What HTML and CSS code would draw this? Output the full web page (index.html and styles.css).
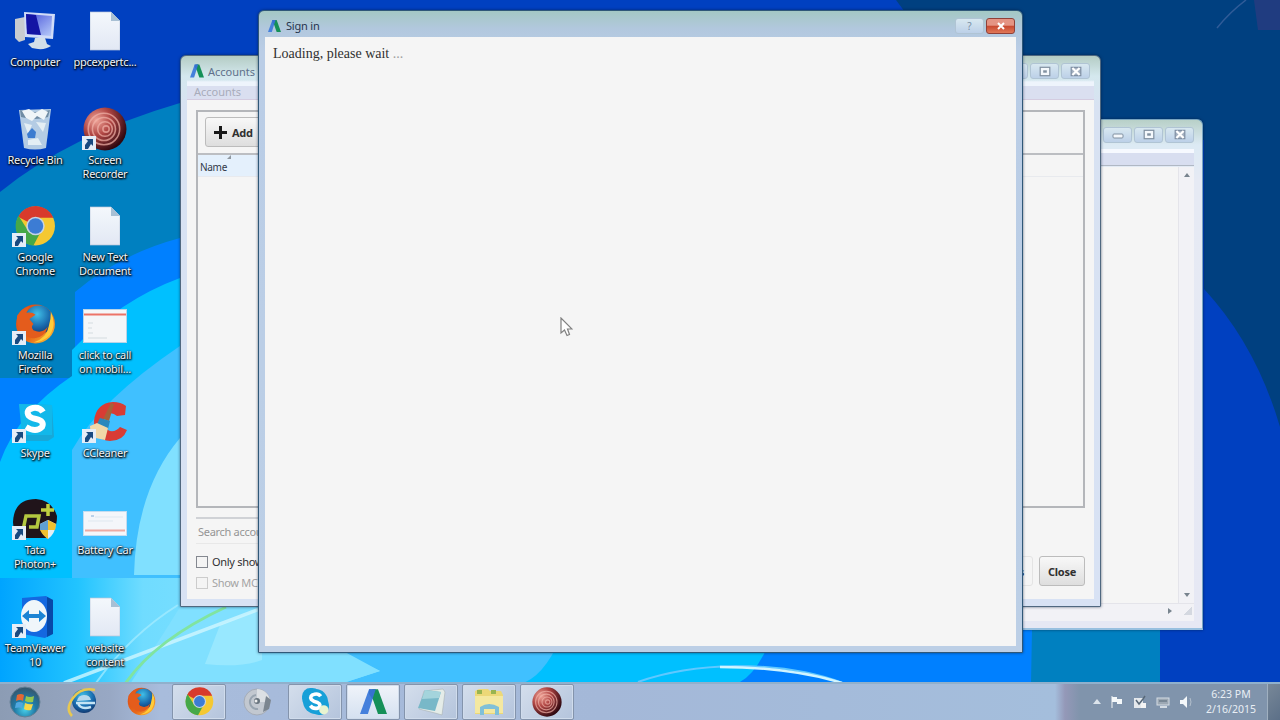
FILE: index.html
```html
<!DOCTYPE html>
<html lang="en">
<head>
	<meta charset="UTF-8">
	<title>Desktop</title>
	<link rel="stylesheet" href="styles.css">
</head>
<body>
	<!-- shared icons -->
	<svg class="defs" width="0" height="0">
		<defs>
			<linearGradient id="gPage" x1="0" y1="0" x2="0" y2="1"><stop offset="0" stop-color="#f4f8fc"/><stop offset="1" stop-color="#e2e8f4"/></linearGradient>
			<linearGradient id="gScreen" x1="0" y1="0" x2="1" y2="1"><stop offset="0" stop-color="#4450d8"/><stop offset="1" stop-color="#b8ccfa"/></linearGradient>
			<radialGradient id="gRed" cx=".3" cy=".3" r=".75"><stop offset="0" stop-color="#f0a498"/><stop offset=".45" stop-color="#b04644"/><stop offset="1" stop-color="#300810"/></radialGradient>
			<radialGradient id="gOrb" cx=".5" cy=".75" r=".7"><stop offset="0" stop-color="#48d0ea"/><stop offset=".5" stop-color="#207aa6"/><stop offset="1" stop-color="#345870"/></radialGradient>
			<radialGradient id="gGlobe" cx=".45" cy=".3" r=".75"><stop offset="0" stop-color="#40c0e8"/><stop offset=".6" stop-color="#1868ac"/><stop offset="1" stop-color="#123468"/></radialGradient>
			<linearGradient id="gFox" x1="0" y1="0" x2="1" y2="1"><stop offset="0" stop-color="#d84818"/><stop offset=".6" stop-color="#e86818"/><stop offset="1" stop-color="#ffd040"/></linearGradient>
		</defs>
		<symbol id="page" viewBox="0 0 30 40">
			<path d="M0 1H21L30 10V39H0Z" fill="url(#gPage)" stroke="#b8c4d8" stroke-width=".7"/>
			<path d="M21 1V10H30Z" fill="#a8c0d4"/>
		</symbol>
		<symbol id="arrow" viewBox="0 0 14 14">
			<path d="M0 0H14V14H0Z" fill="#e4edf7"/>
			<path d="M4 3H11V10L9 8L6 13H3V9L6 5Z" fill="#184a80"/>
		</symbol>
		<symbol id="ads" viewBox="0 0 24 24">
			<path d="M8 1H14L7 23H0Z" fill="#4580dc"/>
			<path d="M11 1H16L24 23H16L10 6Z" fill="#159058"/>
			<path d="M8 1H14L11 10L8 5Z" fill="#3672d0"/>
		</symbol>
		<symbol id="chrome" viewBox="0 0 40 40">
			<circle cx="20" cy="20" r="19" fill="#f4c832"/>
			<path d="M20 20L3 11A19 19 0 0 1 37.500 12L20 12Z" fill="#d83a2c"/>
			<path d="M3.500 10A19 19 0 0 0 18 39L26 24L13 25Z" fill="#45a848"/>
			<circle cx="20" cy="20" r="9" fill="#c8d4e4"/>
			<circle cx="20" cy="20" r="7.500" fill="#3c7cd4"/>
		</symbol>
		<symbol id="firefox" viewBox="0 0 40 40">
			<circle cx="20" cy="20" r="19" fill="url(#gFox)"/>
			<circle cx="23" cy="16" r="14" fill="url(#gGlobe)"/>
			<path d="M2 12Q7 4 14 3L11 9Q17 8 20 11L14 15L18 20Q15 23 18 26Q26 30 32 23Q29 33 19 34Q5 33 2 18Z" fill="#e45c1c"/>
			<path d="M35 8Q41 20 34 31Q27 38 18 38Q31 34 33 22Q35 16 35 8Z" fill="#ffcc38"/>
		</symbol>
		<symbol id="target" viewBox="0 0 42 42">
			<circle cx="21" cy="21" r="20.500" fill="url(#gRed)"/>
			<g fill="none" stroke="#f2b4aa" stroke-width="1.500" opacity=".7"><circle cx="22" cy="21" r="3"/><circle cx="21" cy="21" r="7"/><circle cx="20" cy="21" r="11"/><circle cx="20" cy="21" r="15"/></g>
		</symbol>
		<symbol id="skype" viewBox="0 0 28 28">
			<rect x="1" y="1" width="18" height="18" rx="8" fill="#18a0d8"/>
			<rect x="9" y="9" width="18" height="18" rx="8" fill="#18a0d8"/>
			<circle cx="14" cy="14" r="12" fill="#18a0d8"/>
			<path d="M19 9Q17 6 13 7Q8 8 10 12Q12 14 16 15Q20 17 17 20Q12 22 9 18" fill="none" stroke="#fff" stroke-width="3.500"/>
			<circle cx="22" cy="22" r="4.500" fill="#e8f4d0"/>
		</symbol>
		<symbol id="restore" viewBox="0 0 10 9">
			<rect x="1" y="1" width="8" height="7" fill="#f4f8fc" stroke="#8090a0"/>
			<rect x="3.500" y="3.500" width="3" height="2" fill="#8090a0"/>
		</symbol>
		<symbol id="cross" viewBox="0 0 10 9">
			<path d="M1 1H9V8H1Z" fill="#a4b0c0" stroke="#8090a4"/>
			<path d="M2 1.500L8 7.500M8 1.500L2 7.500" stroke="#fff" stroke-width="1.800"/>
		</symbol>
	</svg>

	<section class="desktop">
		<svg class="wallpaper" width="1280" height="684" viewBox="0 0 1280 684">
			<defs>
				<linearGradient id="gGlow" x1="0" y1="0" x2="1" y2="0"><stop offset="0" stop-color="#00a4ff"/><stop offset=".3" stop-color="#22c4ff"/><stop offset=".55" stop-color="#70dcff"/><stop offset="1" stop-color="#80e0ff"/></linearGradient>
			</defs>
			<rect width="1280" height="684" fill="#0040c0"/>
			<path d="M0 192Q70 135 180 103H1160V684H0Z" fill="#0080c0"/>
			<path d="M896 0H1280V427Q1256 345 1204 289V140H1000Z" fill="#004080"/>
			<path d="M1254 0H1280V30H1258Z" fill="#203c80"/>
			<path d="M1217 28Q1230 12 1246 0" stroke="#305c98" stroke-width="1.500" fill="none"/>
			<path d="M0 378H75V292Q120 254 180 238H1039L1031 684H0Z" fill="#0080ff"/>
			<path d="M0 462Q18 412 72 376V350Q120 300 180 278H830Q800 665 735 684H0Z" fill="#00c0ff"/>
			<path d="M72 575V450Q100 400 180 346H605Q590 665 520 684H72Z" fill="#40c0ff"/>
			<path d="M180 438Q136 490 134 575H180V684H340L380 671L340 652H260V438Z" fill="#80e0ff"/>
			<path d="M0 578H180V607H260V684H0Z" fill="url(#gGlow)"/>
			<path d="M180 607H260V652H345L380 671L340 684H130Q160 640 180 607Z" fill="#80e0ff"/>
			<path d="M220 625Q250 612 262 608V660Q240 668 205 664Z" fill="#98e8ff"/>
			<path d="M64 683Q150 650 262 608" fill="none" stroke="#d0f6ff" stroke-width="3.500" opacity=".8"/>
			<path d="M125 684Q155 640 226 607" fill="none" stroke="#80e4a0" stroke-width="3"/>
			<path d="M96 683Q130 635 178 605" fill="none" stroke="#a8ecff" stroke-width="2" opacity=".7"/>
			<path d="M638 682Q680 667 735 666Q800 666 845 684" fill="none" stroke="#60c8ff" stroke-width="2"/>
			<path d="M720 667Q790 667 842 683" fill="none" stroke="#d0f4ff" stroke-width="2.500"/>
		</svg>

		<section class="icons">
			<div class="icon">
				<svg width="42" height="42" viewBox="0 0 42 42"><path d="M1 9L11 7V30L5 32L1 28Z" fill="#c8ccd0"/><path d="M10 2L41 4L39 29L11 27Z" fill="#d0dcf8"/><path d="M12 4L38 6L37 26L13 24Z" fill="url(#gScreen)"/><path d="M12 4L22 5L27 25L13 24Z" fill="#1414a4"/><path d="M21 28H31L33 34L37 36Q30 41 18 38L14 34L20 32Z" fill="#d4e0e8"/></svg>
				<span>Computer</span>
			</div>
			<div class="icon"><svg width="30" height="40"><use href="#page"/></svg><span>ppcexpertc...</span></div>
			<div class="icon">
				<svg width="34" height="42" viewBox="0 0 34 42"><path d="M1 2L33 1L28 40Q17 43 6 40Z" fill="#b4cce4"/><path d="M2 2Q17 6 32 2L30 9Q17 13 3 9Z" fill="#708ca4"/><path d="M4 3L11 1L17 5L24 1L30 4L26 12L19 8L14 13L8 10Z" fill="#f0f5f8"/><path d="M6 15L14 17L10 26ZM18 14L28 15L25 24ZM10 32L20 30L24 37H10Z" fill="#e4eef4"/><path d="M9 26L14 20L18 24L17 30L10 30Z" fill="#3c7cd0"/></svg>
				<span>Recycle Bin</span>
			</div>
			<div class="icon shortcut"><svg width="44" height="44"><use href="#target"/></svg><svg class="lnk"><use href="#arrow"/></svg><span>Screen<br>Recorder</span></div>
			<div class="icon shortcut"><svg width="41" height="41"><use href="#chrome"/></svg><svg class="lnk"><use href="#arrow"/></svg><span>Google<br>Chrome</span></div>
			<div class="icon"><svg width="30" height="40"><use href="#page"/></svg><span>New Text<br>Document</span></div>
			<div class="icon shortcut"><svg width="41" height="41"><use href="#firefox"/></svg><svg class="lnk"><use href="#arrow"/></svg><span>Mozilla<br>Firefox</span></div>
			<div class="icon">
				<svg class="thumb" width="44" height="34" viewBox="0 0 44 34"><rect x=".5" y=".5" width="43" height="33" fill="#f4f6f8" stroke="#b8d4e8"/><path d="M1 5.500H43" stroke="#ec7468" stroke-width="2"/><path d="M5 14H10M5 19H9M5 24H10M5 29H24" stroke="#d4dce0"/></svg>
				<span>click to call<br>on mobil...</span>
			</div>
			<div class="icon shortcut">
				<svg width="42" height="42" viewBox="0 0 42 42"><path d="M5 3L38 4L40 36L34 40H12Z" fill="#18a8d8"/><path d="M5 3L38 4V34H8Z" fill="#12b8ea"/><path d="M29 11Q26 6 19 7Q11 9 15 15Q17 17 22 18Q31 20 28 26Q22 32 12 26" fill="none" stroke="#fff" stroke-width="6"/></svg>
				<svg class="lnk"><use href="#arrow"/></svg><span>Skype</span>
			</div>
			<div class="icon shortcut">
				<svg width="44" height="42" viewBox="0 0 44 42"><path d="M43 5L42 14L34 15Q27 9 22 16Q18 26 27 30Q33 31 37 26L44 29Q40 40 27 40Q11 39 11 20Q13 2 30 1Q38 1 43 5Z" fill="#d83c34"/><path d="M28 2L31 3L26 20L20 18Z" fill="#a86038"/><path d="M17 17L27 20L25 28L14 23Z" fill="#2888bc"/><path d="M14 22L25 27L22 39L8 36L7 25Z" fill="#f0d8a8"/></svg>
				<svg class="lnk"><use href="#arrow"/></svg><span>CCleaner</span>
			</div>
			<div class="icon shortcut">
				<svg width="46" height="42" viewBox="0 0 46 42"><path d="M1 24Q2 1 24 1Q40 2 45 18Q45 34 34 40H8Q1 34 1 24Z" fill="#20141a"/><path d="M11 32L14 18H27L25 29H17" fill="none" stroke="#b4c840" stroke-width="3.500"/><path d="M29 12H42M36 6V18" stroke="#c0d040" stroke-width="3.500"/><path d="M28 26L36 22L44 26Q43 36 36 41Q29 36 28 26Z" fill="#e4eef4"/><path d="M36 22L44 26L43 32H36ZM28 32H36V41Q31 38 28 32Z" fill="#f0c030"/><path d="M36 22V32H28V26Z" fill="#60a0d4"/></svg>
				<svg class="lnk"><use href="#arrow"/></svg><span>Tata<br>Photon+</span>
			</div>
			<div class="icon">
				<svg class="thumb low" width="44" height="25" viewBox="0 0 44 25"><rect x=".5" y=".5" width="43" height="24" fill="#f4f6fa" stroke="#c4dcf0"/><path d="M8 5H11" stroke="#80acd8"/><path d="M12 6H40M5 10H30" stroke="#dfe8f0"/><path d="M2 19.500H42" stroke="#ecaaa4" stroke-width="2"/></svg>
				<span>Battery Car</span>
			</div>
			<div class="icon shortcut">
				<svg width="42" height="44" viewBox="0 0 42 44"><path d="M8 3L32 1L39 5L39 38L31 43L8 39Z" fill="#1468e0"/><path d="M33 2L39 5V39L33 42Z" fill="#0848a8"/><ellipse cx="20" cy="21" rx="13" ry="16" fill="#f0f6fa"/><path d="M8 21L15 15V19H25V15L32 21L25 27V23H15V27Z" fill="#1c84d4"/></svg>
				<svg class="lnk"><use href="#arrow"/></svg><span>TeamViewer<br>10</span>
			</div>
			<div class="icon"><svg width="30" height="40"><use href="#page"/></svg><span>website<br>content</span></div>
		</section>

		<!-- back window -->
		<section class="window win-main">
			<header class="titlebar">
				<div class="controls">
					<i class="btn"><svg width="14" height="9" viewBox="0 0 14 9"><rect x="2" y="4" width="10" height="4" rx="1" fill="#f4f8fc" stroke="#8090a0"/></svg></i>
					<i class="btn"><svg width="12" height="11"><use href="#restore"/></svg></i>
					<i class="btn"><svg width="12" height="11"><use href="#cross"/></svg></i>
				</div>
			</header>
			<div class="menubar"></div>
			<div class="scroll-area">
				<div class="view"></div>
				<div class="vbar"><i class="up"></i><i class="down"></i></div>
			</div>
			<div class="hbar"><i class="right"></i><i class="grip"></i></div>
		</section>

		<!-- accounts manager -->
		<section class="window win-accounts">
			<header class="titlebar">
				<svg width="14" height="14"><use href="#ads"/></svg>
				<span>Accounts</span>
				<div class="controls">
					<i class="btn"></i>
					<i class="btn"><svg width="12" height="11"><use href="#restore"/></svg></i>
					<i class="btn"><svg width="12" height="11"><use href="#cross"/></svg></i>
				</div>
			</header>
			<div class="menubar">Accounts</div>
			<div class="client">
				<div class="panel">
					<div class="toolbar">
						<button class="push add"><svg width="13" height="13" viewBox="0 0 13 13"><path d="M6.500 0V13M0 6.500H13" stroke="#181818" stroke-width="3"/></svg>Add</button>
					</div>
					<div class="thead"><span>Name</span><svg width="5" height="4" viewBox="0 0 5 4"><path d="M0 4L4 0V4Z" fill="#9098a0"/></svg></div>
				</div>
				<div class="search">Search accounts</div>
				<div class="bottom">
					<div class="checks">
						<label><i></i>Only show active</label>
						<label class="off"><i></i>Show MCC</label>
					</div>
					<div class="actions">
						<button class="push flat">Open in tabs</button>
						<button class="push">Close</button>
					</div>
				</div>
			</div>
		</section>

		<!-- sign in dialog -->
		<section class="window win-signin">
			<header class="titlebar">
				<svg width="13" height="14"><use href="#ads"/></svg>
				<span>Sign in</span>
				<div class="controls">
					<i class="btn help">?</i>
					<i class="btn close"><svg width="10" height="8" viewBox="0 0 10 8"><path d="M2 1L8 7M8 1L2 7" stroke="#fff" stroke-width="2"/></svg></i>
				</div>
			</header>
			<div class="loading">Loading, please wait <span>...</span></div>
		</section>

		<svg class="cursor" width="13" height="20" viewBox="0 0 13 20"><path d="M1 1V16L4.500 13L7 18.500L9.500 17.500L7.500 12H12Z" fill="#fff" stroke="#808080" stroke-width="1.200"/></svg>
	</section>

	<footer class="taskbar">
		<div class="task start">
			<svg width="32" height="32" viewBox="0 0 32 32"><circle cx="16" cy="16" r="15" fill="url(#gOrb)" stroke="#648094"/><path d="M8 9Q12 7 15 9L14 15Q11 13 7 15Z" fill="#e46834"/><path d="M17 10Q21 12 25 10L24 16Q20 17 16 15Z" fill="#94c850"/><path d="M7 17Q10 15 14 17L13 22Q10 21 6 22Z" fill="#50a8e0"/><path d="M16 17Q20 19 24 18L22 24Q18 25 15 23Z" fill="#f8d848"/></svg>
		</div>
		<div class="task">
			<svg width="32" height="30" viewBox="0 0 32 30"><circle cx="17" cy="14" r="12" fill="url(#gGlobe)"/><path d="M10 14Q11 8 17 8T24 13Z" fill="#b8d8ec"/><path d="M9 16H28M11 16Q13 23 24 20" stroke="#c4e4f4" stroke-width="2.500" fill="none"/><path d="M28 3Q14 0 6 11T5 29" fill="none" stroke="#e8c850" stroke-width="2.500"/></svg>
		</div>
		<div class="task"><svg width="29" height="29"><use href="#firefox"/></svg></div>
		<div class="task open"><svg width="29" height="29"><use href="#chrome"/></svg></div>
		<div class="task disc">
			<svg width="30" height="30" viewBox="0 0 30 30"><circle cx="15" cy="15" r="13" fill="#c2c8d0" stroke="#a4acb8"/><path d="M15 2A13 13 0 0 1 28 15H15Z" fill="#dce0e4"/><path d="M14 8A7 7 0 1 0 16 22" fill="none" stroke="#98a4b0" stroke-width="2"/><path d="M24 9L29 13L27 22L21 25Z" fill="#7c8690"/><circle cx="15" cy="14" r="3" fill="#68747e"/><circle cx="14" cy="14" r="1.500" fill="#eee"/></svg>
		</div>
		<div class="task open"><svg width="29" height="29"><use href="#skype"/></svg></div>
		<div class="task open active"><svg width="27" height="27"><use href="#ads"/></svg></div>
		<div class="task open">
			<svg width="30" height="28" viewBox="0 0 30 28"><path d="M8 3L27 1L29 4L26 27L19 25L3 21Z" fill="#e4ece8" stroke="#a8b0b4" stroke-width=".6"/><path d="M9 2L25 4L19 23L2 20Z" fill="#78b8c8"/><path d="M9 2L25 4L23 10L6 11Z" fill="#a4d4dc"/></svg>
		</div>
		<div class="task open">
			<svg width="32" height="28" viewBox="0 0 32 28"><path d="M2 3L6 1H15L17 3H28L30 7V26H2Z" fill="#ecd878"/><path d="M4 2H9V6H4ZM18 2H23V6H18Z" fill="#98b450"/><path d="M2 8H30V25H2Z" fill="#f4e8a0"/><path d="M7 27V19Q16 13 26 19V27H22V21H11V27Z" fill="#80c0d8"/></svg>
		</div>
		<div class="task open"><svg width="30" height="30"><use href="#target"/></svg></div>

		<div class="tray">
			<svg width="8" height="5" viewBox="0 0 8 5"><path d="M0 5L4 0L8 5Z" fill="#dce4ec"/></svg>
			<svg width="14" height="14" viewBox="0 0 14 14"><path d="M2 1V13" stroke="#ccd4dc" stroke-width="1.500"/><path d="M2 2H7V4H12V9H7V7H2Z" fill="#f4f8fa"/></svg>
			<svg width="14" height="14" viewBox="0 0 14 14"><rect x="1" y="3" width="9" height="10" fill="#e4e8ec"/><path d="M3 5L6 9L10 4L12 1" fill="none" stroke="#586878" stroke-width="1.500"/><path d="M8 8H13V13H8Z" fill="#f4f4f4"/></svg>
			<svg width="14" height="14" viewBox="0 0 14 14"><rect x="1" y="3" width="12" height="7" fill="#9ca8b4" stroke="#d4dce4"/><path d="M4 12H11" stroke="#d4dce4" stroke-width="2"/><path d="M3 6H11" stroke="#566878"/></svg>
			<svg width="14" height="14" viewBox="0 0 14 14"><path d="M1 5H4L8 1V13L4 9H1Z" fill="#f4f8fa"/><path d="M11 3Q13 7 11 11" fill="none" stroke="#b4c0cc"/></svg>
			<div class="clock">6:23 PM<br>2/16/2015</div>
			<div class="peek"></div>
		</div>
	</footer>
</body>
</html>
```

FILE: styles.css
```css
*{margin:0;padding:0;box-sizing:border-box}
body{
	width: 1280px;
	height: 720px;
	overflow: hidden;
	display: flex;
	flex-direction: column;
	font-family: "Noto Sans","Open Sans",sans-serif;
	font-size: 11px;
}
svg{display: block;flex: none}
i{font-style: normal}
.defs{position: absolute}
.desktop{
	position: relative;
	height: 682px;
	overflow: hidden;
}
.wallpaper{
	position: absolute;
	left: 0;
	top: 0;
}

/* desktop icons */
.icons{
	position: relative;
	display: grid;
	grid-template-columns: 70px 70px;
	grid-auto-rows: 97.7px;
	width: 140px;
	padding-top: 9px;
}
.icon{
	position: relative;
	display: flex;
	flex-direction: column;
	align-items: center;
}
.icon > svg:first-child{
	height: 44px;
	margin-bottom: 2px;
}
.icon > .thumb:first-child{
	height: 34px;
	margin: 7px 0 5px;
}
.icon > .low:first-child{
	height: 25px;
	margin: 14px 0 7px;
}
.icon span{
	color: #f0f6fc;
	font-size: 11px;
	line-height: 14px;
	letter-spacing: -.25px;
	text-align: center;
	white-space: nowrap;
	text-shadow: 0 1px 2px #000,1px 1px 2px #000,0 0 2px #123;
}
.icon .lnk{
	position: absolute;
	left: 12px;
	top: 29px;
	width: 14px;
	height: 14px;
}

/* windows */
.window{
	position: absolute;
	display: flex;
	flex-direction: column;
	border: 1px solid #506880;
	border-radius: 6px 6px 0 0;
	box-shadow: 0 0 3px rgba(0,20,50,.6);
	overflow: hidden;
}
.titlebar{
	display: flex;
	align-items: center;
	flex: none;
	color: #26344c;
}
.controls{
	display: flex;
	margin-left: auto;
}
.btn{
	display: flex;
	align-items: center;
	justify-content: center;
	width: 29px;
	height: 16px;
	border: 1px solid #b0c4d4;
	border-radius: 3px;
	background: linear-gradient(#d8e8f0,#bcd0e8);
	margin-left: 2px;
}
.win-main{
	left: 700px;
	top: 119px;
	width: 503px;
	height: 511px;
	padding: 0 8px 7px;
	background: linear-gradient(#b8d0c8,#dceaf4 25px,#e6eaf4 60px,#e6e8f4);
	border-color: #78a4c0;
	border-bottom: 2px solid #98c0e0;
}
.win-main .titlebar{height: 29px}
.win-main .menubar{
	height: 17px;
	background: #d8def0;
	border-bottom: 1px solid #b0b8c4;
	margin-bottom: 1px;
}
.win-main .menubar::before{
	content: "";
	display: block;
	height: 4px;
	background: #f6f9ff;
}
.scroll-area{
	display: flex;
	flex: 1;
	background: #f5f5f5;
}
.view{flex: 1}
.vbar{
	display: flex;
	flex-direction: column;
	justify-content: space-between;
	align-items: center;
	width: 16px;
	padding: 6px 0;
	background: #f2f2f6;
	border-left: 1px solid #e4e4ea;
}
.up,.down,.right{
	border: 3px solid transparent;
}
.up{border-bottom: 4px solid #78848e;border-top: 0}
.down{border-top: 4px solid #78848e;border-bottom: 0}
.right{border-left: 4px solid #78848e;border-right: 0}
.hbar{
	display: flex;
	align-items: center;
	justify-content: flex-end;
	height: 18px;
	padding: 0 2px 4px 0;
	background: #f2f2f6;
	border-top: 1px solid #e4e4ea;
}
.grip{
	width: 8px;
	height: 8px;
	margin-left: 12px;
	background: linear-gradient(135deg,transparent 50%,#d4d8e0 50%);
}

.win-accounts{
	left: 180px;
	top: 55px;
	width: 921px;
	height: 552px;
	padding: 0 6px 7px;
	background: linear-gradient(#b4ccc4,#d4e8ee 20px,#d8e2f2 50px,#d8e2f4);
}
.win-accounts .titlebar{
	height: 30px;
	padding: 0 3px;
	background: linear-gradient(transparent 24px,#eef4fc 26px);
	color: #60708c;
}
.win-accounts .titlebar span{margin-left: 4px}
.win-accounts .controls{margin-right: 1px}
.win-accounts .menubar{
	height: 14px;
	padding-left: 7px;
	background: #dadff0;
	border-bottom: 1px solid #d4cce0;
	color: #a8acba;
	line-height: 11px;
	flex: none;
}
.client{
	flex: 1;
	display: flex;
	flex-direction: column;
	padding: 10px 9px 0;
	background: #f5f5f5;
}
.panel{
	height: 398px;
	border: 2px solid #b4b6ba;
	flex: none;
}
.toolbar{
	height: 43px;
	padding: 5px 7px;
	border-bottom: 2px solid #bcbec2;
}
.push{
	display: flex;
	align-items: center;
	justify-content: center;
	height: 30px;
	width: 46px;
	border: 1px solid #bcbcbc;
	border-radius: 3px;
	background: linear-gradient(#f8f8f8,#dedede);
	font: bold 11px "Noto Sans","Open Sans",sans-serif;
	letter-spacing: -.3px;
	color: #303030;
}
.push.add{
	width: 90px;
	gap: 5px;
	justify-content: flex-start;
	padding-left: 8px;
}
.thead{
	display: flex;
	height: 22px;
	border-bottom: 1px solid #e8eaee;
	background: linear-gradient(90deg,#e4f0fc 100px,#f5f5f5 100px);
	line-height: 24px;
	color: #303848;
	font-size: 10px;
	letter-spacing: -.3px;
	padding-left: 2px;
}
.search{
	height: 27px;
	margin-top: 9px;
	padding-left: 2px;
	border-top: 2px solid #d0d2d6;
	border-bottom: 1px solid #e8e8e8;
	width: 400px;
	color: #949494;
	line-height: 25px;
	letter-spacing: -.3px;
}
.bottom{
	display: flex;
	justify-content: space-between;
	padding-top: 7px;
}
.checks label{
	display: flex;
	align-items: center;
	height: 21px;
	gap: 4px;
	color: #303030;
	letter-spacing: -.3px;
}
.checks i{
	width: 12px;
	height: 12px;
	border: 1px solid #848890;
	background: #f4f4f4;
}
.checks .off{color: #a4a4a4}
.checks .off i{border-color: #ccc}
.actions{display: flex;gap: 6px;padding-top: 5px}
.push.flat{
	width: 84px;
	background: #f5f5f5;
	border-color: #e4e4e4;
}

.win-signin{
	left: 258px;
	top: 10px;
	width: 765px;
	height: 643px;
	padding: 0 6px 6px;
	border-color: #305878;
	background: linear-gradient(#a4c8c4,#b2c8de 18px,#bacde6 40px,#bccfe6);
}
.win-signin .titlebar{
	height: 26px;
	padding: 3px 1px 0 3px;
}
.win-signin .titlebar span{margin-left: 5px;letter-spacing: -.2px}
.win-signin .help{color: #7890a4;font-size: 10px}
.win-signin .close{
	border-color: #904038;
	background: linear-gradient(#e49484 45%,#c84830 50%,#e07858);
}
.loading{
	flex: 1;
	padding: 9px 8px;
	background: #f5f5f5;
	color: #303030;
	font: 14px/16px "Liberation Serif",serif;
}
.loading span{color: #a0a0a0}
.cursor{
	position: absolute;
	left: 560px;
	top: 317px;
}

/* taskbar */
.taskbar{
	display: flex;
	height: 38px;
	border-top: 2px solid #90b0cc;
	background: linear-gradient(90deg,#8c9cb4,#98a8c4 110px,#a8bcdc 160px,#a4b8d8 600px,#a4bedc 1055px,#9498b8 1065px,#8094ac 1080px,#8094ac);
}
.task{
	display: flex;
	align-items: center;
	justify-content: center;
	width: 54px;
	margin-right: 4px;
	padding-bottom: 1px;
	flex: none;
}
.task.start{width: 50px;margin-right: 6px}
.task.open{
	border: 1px solid #8494ac;
	border-radius: 2px;
	background: linear-gradient(135deg,#d4deec,#b4c4dc);
	box-shadow: inset 0 0 0 1px #d0dcec;
}
.task.disc{width: 54px;margin-right: 4px}
.task.active{background: linear-gradient(#f0f4fa,#d4e0f0)}
.tray{
	display: flex;
	align-items: center;
	gap: 9px;
	margin-left: auto;
	padding-bottom: 1px;
}
.clock{
	width: 58px;
	color: #e8eef4;
	font-size: 10.500px;
	line-height: 15px;
	text-align: center;
}
.peek{
	width: 13px;
	height: 36px;
	margin-left: -2px;
	border-left: 1px solid #a0b0c0;
	background: linear-gradient(135deg,#788898,#5c7088);
}
```
